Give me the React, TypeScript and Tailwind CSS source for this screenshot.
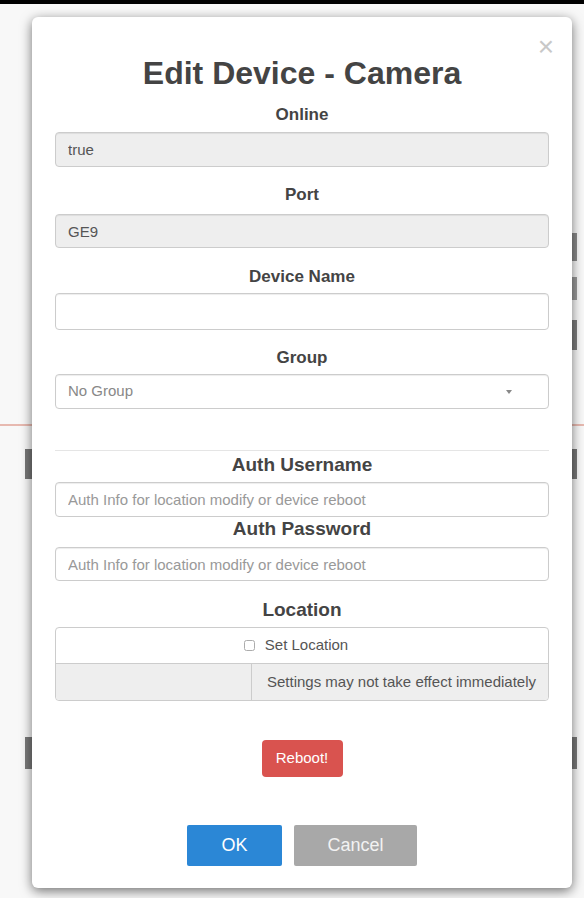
import React, { useState } from 'react';

const labelClass = 'text-center font-bold text-[#444] leading-6';
const inputBase =
  'w-full border border-[#ccc] rounded-[4px] px-3 text-[15px] text-[#555] outline-none shadow-[inset_0_1px_1px_rgba(0,0,0,0.075)]';

const EditDevice: React.FC = () => {
  const [deviceName, setDeviceName] = useState('');
  const [user, setUser] = useState('');
  const [pass, setPass] = useState('');
  const [setLocation, setSetLocation] = useState(false);

  return (
    <div className="relative w-[584px] h-[898px] bg-[#f8f8f8] overflow-hidden font-['Liberation_Sans',Arial,sans-serif]">
      {/* page behind the dialog */}
      <div className="flex flex-col">
        <div className="h-[4px] bg-black" />
        <div className="h-[229px]" />
        <div className="flex justify-end h-[28px] pr-[7px]">
          <div className="w-[5px] bg-[#8a8a8a]" />
        </div>
        <div className="h-[16px]" />
        <div className="flex justify-end h-[23px] pr-[7px]">
          <div className="w-[5px] bg-[#9a9a9a]" />
        </div>
        <div className="h-[20px]" />
        <div className="flex justify-end h-[30px] pr-[7px]">
          <div className="w-[5px] bg-[#7d7d7d]" />
        </div>
        <div className="h-[74px]" />
        <div className="h-[2px] bg-[#e7b9b0]" />
        <div className="h-[23px]" />
        <div className="flex justify-between h-[30px] pl-[25px] pr-[7px]">
          <div className="w-[7px] bg-[#777]" />
          <div className="w-[5px] bg-[#777]" />
        </div>
        <div className="h-[258px]" />
        <div className="flex justify-between h-[32px] pl-[25px] pr-[7px]">
          <div className="w-[7px] bg-[#7a7a7a]" />
          <div className="w-[5px] bg-[#7a7a7a]" />
        </div>
      </div>

      {/* dialog */}
      <div className="absolute left-[32px] top-[17px] w-[540px] h-[871px] bg-white rounded-[6px] shadow-[0_3px_12px_rgba(0,0,0,0.55)] px-[23px] pt-[40px] flex flex-col">
        <button className="absolute top-[16px] right-[18px] text-[#c8c8c8] text-[28px] leading-none font-light">
          ×
        </button>

        <h4 className="text-center text-[32px] font-bold text-[#444] leading-8">Edit Device - Camera</h4>

        <div className={`${labelClass} text-[17px] mt-[14px] mb-[5px]`}>Online</div>
        <input className={`${inputBase} h-[35px] bg-[#eee]`} value="true" disabled readOnly />

        <div className={`${labelClass} text-[17px] mt-[16px] mb-[7px]`}>Port</div>
        <input className={`${inputBase} h-[34px] bg-[#eee]`} value="GE9" disabled readOnly />

        <div className={`${labelClass} text-[17px] mt-[17px] mb-[4px]`}>Device Name</div>
        <input
          className={`${inputBase} h-[37px] bg-white`}
          value={deviceName}
          onChange={e => setDeviceName(e.target.value)}
        />

        <div className={`${labelClass} text-[17px] mt-[16px] mb-[4px]`}>Group</div>
        <div className={`${inputBase} h-[35px] bg-white flex items-center justify-between text-[#888]`}>
          <span>No Group</span>
          <span className="w-0 h-0 border-l-[3px] border-r-[3px] border-t-[4px] border-l-transparent border-r-transparent border-t-[#888] mr-[24px]" />
        </div>

        <div className="h-px bg-[#e5e5e5] mt-[41px]" />

        <div className={`${labelClass} text-[19px] mt-[2px] mb-[5px]`}>Auth Username</div>
        <input
          className={`${inputBase} h-[35px] bg-white placeholder-[#999]`}
          placeholder="Auth Info for location modify or device reboot"
          value={user}
          onChange={e => setUser(e.target.value)}
        />

        <div className={`${labelClass} text-[19px] mb-[6px]`}>Auth Password</div>
        <input
          type="password"
          className={`${inputBase} h-[34px] bg-white placeholder-[#999]`}
          placeholder="Auth Info for location modify or device reboot"
          value={pass}
          onChange={e => setPass(e.target.value)}
        />

        <div className={`${labelClass} text-[19px] mt-[17px] mb-[5px]`}>Location</div>
        <div className="border border-[#ccc] rounded-[4px] flex flex-col text-[15px] text-[#555]">
          <label className="h-[36px] flex items-center justify-center gap-[10px] pr-[12px] border-b border-[#ccc]">
            <input
              type="checkbox"
              checked={setLocation}
              onChange={e => setSetLocation(e.target.checked)}
              className="w-[11px] h-[11px] accent-[#888] opacity-60"
            />
            <span>Set Location</span>
          </label>
          <div className="h-[36px] flex">
            <div className="w-[195px] bg-[#eee] rounded-bl-[4px]" />
            <div className="flex-1 bg-[#eee] border-l border-[#ccc] rounded-br-[4px] flex items-center justify-end pr-[12px] text-[#555]">
              Settings may not take effect immediately
            </div>
          </div>
        </div>

        <div className="flex justify-center mt-[39px]">
          <button className="h-[37px] w-[81px] bg-[#d9534f] text-white text-[15px] rounded-[4px]">Reboot!</button>
        </div>

        <div className="flex justify-center gap-[12px] mt-[48px]">
          <button className="h-[41px] w-[95px] bg-[#2b87d6] text-white text-[18px] rounded-[2px]">OK</button>
          <button className="h-[41px] w-[123px] bg-[#a8a8a8] text-[#f2f2f2] text-[18px] rounded-[2px]">Cancel</button>
        </div>
      </div>
    </div>
  );
};

export default function App() {
  return <EditDevice />;
}
